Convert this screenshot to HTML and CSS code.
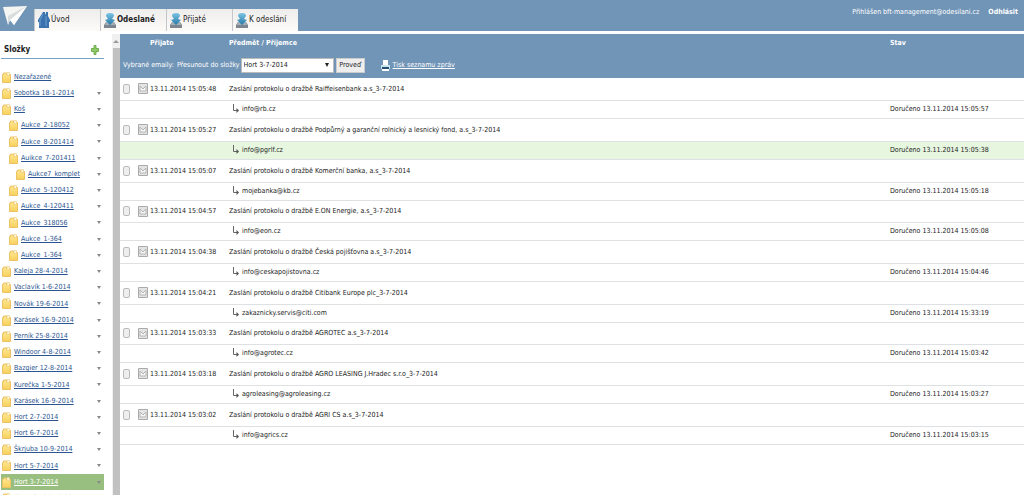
FILE: index.html
```html
<!DOCTYPE html>
<html lang="cs"><head><meta charset="utf-8"><title>Odeslané</title><link rel="stylesheet" href="styles.css"></head>
<body>
<svg class="sprites" aria-hidden="true">
<defs>
<linearGradient id="blue" x1="0" y1="0" x2="0" y2="1"><stop offset="0" stop-color="#7cc4e4"/><stop offset="1" stop-color="#2579a8"/></linearGradient>
<linearGradient id="gold" x1="0" y1="0" x2="0" y2="1"><stop offset="0" stop-color="#ffe893"/><stop offset="1" stop-color="#f8d05c"/></linearGradient>
</defs>
<symbol id="folder" viewBox="0 0 9 11"><path d="M.5 2.500H1.500V1H4.500V2.500H8.500V10.500H.5Z" fill="url(#gold)" stroke="#ecc264"/><path d="M5 .5h2.500v3H5z" fill="#fff6d6" stroke="#e9c367" stroke-width=".5"/></symbol>
<symbol id="outbox" viewBox="0 0 12 15"><path d="M2 9h8l2 3v3H0v-3z" fill="#7d868e"/><path d="M2 9h8l1 3H1z" fill="#a9b1b8"/><path d="M6 0C9 0 10 1 10 3L8 6l3 1-5 5-5-5 3-1-2-3C2 1 3 0 6 0Z" fill="url(#blue)"/></symbol>
<symbol id="mail" viewBox="0 0 10 11"><path d="M.5.5h9v10h-9z" fill="#e4e4e4" stroke="#aaa"/><path d="M2 3v5h6V3L5 6 2 3" fill="#f7f7f7" stroke="#b4b4b4"/></symbol>
<symbol id="reply" viewBox="0 0 6 10"><path d="M.5 0v6.500H5" fill="none" stroke="#666"/><path d="M3.500 4 6 6.500 3.500 9Z" fill="#555"/></symbol>
</svg>
<header class="top">
<svg class="logo" viewBox="0 0 26 20"><path d="M2 1 26 0 13 19 9 14 7 19Z" fill="#f5f5f3"/><path d="M7 10 26 0 9 14 7 19Z" fill="#d9dcdc"/><path d="M9 14 26 0 13 19Z" fill="#fff"/></svg>
<nav class="tabs">
<a class="tab" href="#"><svg class="home" viewBox="0 0 12 16"><path d="M5 0 0 8v2h1v6h10v-6h1V8L10 4V0H8v3L7 1V0Z" fill="#3a73ad"/><path d="M5 2 2 8v6M8 4v10" fill="none" stroke="#6c9fd0"/></svg>Úvod</a>
<a class="tab active" href="#"><svg class="out"><use href="#outbox"/></svg>Odeslané</a>
<a class="tab" href="#"><svg class="out"><use href="#outbox"/></svg>Přijaté</a>
<a class="tab" href="#"><svg class="out"><use href="#outbox"/></svg>K odeslání</a>
</nav>
<div class="user"><span>Přihlášen bft-management@odesilani.cz</span><a href="#">Odhlásit</a></div>
</header>
<div class="layout">
<aside class="side">
<div class="side-main">
<div class="side-head"><h2>Složky</h2><button class="add" aria-label="Přidat složku"><svg viewBox="0 0 8 10"><path d="M3 .5h2v3h2.500v3H5v3H3v-3H.5v-3H3Z" fill="#8fc866" stroke="#6fae50"/></svg></button></div>
<ul class="folders" id="folders"></ul>
</div>
<div class="scroll"><span class="up"></span><span class="thumb"></span></div>
</aside>
<main>
<table class="mails">
<colgroup><col class="c-check"><col class="c-date"><col class="c-subject"><col class="c-state"></colgroup>
<thead>
<tr class="heads"><th></th><th class="received">Přijato</th><th>Předmět / Příjemce</th><th>Stav</th></tr>
<tr><td colspan="4"><div class="tools"><div class="labels"><span>Vybrané emaily:</span><label for="target">Přesunout do složky</label></div><span class="picker"><select id="target"><option>Hort 3-7-2014</option></select></span><button class="go">Proveď</button><a class="print" href="#"><svg viewBox="0 0 9 11"><path d="M2 0h5v5H2z" fill="#fff"/><path d="M0 5h9v4H0z" fill="#c9e4f2"/><path d="M1 7h7v2H1z" fill="#25506f"/><path d="M1 9h7v2H1z" fill="#fff"/></svg><span>Tisk seznamu zpráv</span></a></div></td></tr>
</thead>
<tbody id="rows"></tbody>
</table>
</main>
</div>
<script src="app.js"></script>
</body></html>
```
FILE: styles.css
```css
* { box-sizing: border-box; }
body { margin: 0; height: 100vh; overflow: hidden; display: flex; flex-direction: column; background: #fff; color: #222; font: 7px/12px "DejaVu Sans Condensed", "DejaVu Sans", sans-serif; }
button, select { font: inherit; color: inherit; }
.sprites { position: absolute; width: 0; height: 0; }
.top { display: flex; align-items: flex-end; height: 31px; flex: none; background: #7195b7; color: #fff; }
.logo { width: 26px; height: 20px; margin: 0 7px 5px 1px; }
.tabs { display: flex; }
.tab { display: flex; align-items: center; gap: 1px; width: 66px; height: 22px; padding-left: 3px; background: linear-gradient(#ededed, #fdfbf8); border-left: 1px solid #c3c7ca; color: #222; font-size: 8px; text-decoration: none; white-space: nowrap; }
.tab.active { font-weight: bold; }
.tab svg { flex: none; }
.home { width: 12px; height: 16px; }
.out { width: 12px; height: 15px; }
.user { display: flex; gap: 9px; margin: 0 6px 0 auto; align-self: flex-start; padding-top: 6px; }
.user a { color: #fff; font-weight: bold; text-decoration: none; }
.layout { display: flex; flex: 1; min-height: 0; padding-top: 3px; }
.side { display: flex; width: 120px; flex: none; }
.side-main { flex: 1; padding-left: 1px; margin-right: 8px; overflow: hidden; }
.side-head { display: flex; align-items: center; height: 25px; padding: 8px 5px 0 3px; border-bottom: 1px solid #7da2c6; }
h2 { margin: 0; font-size: 8px; }
.add { margin-left: auto; padding: 0; border: 0; background: none; width: 8px; height: 10px; }
.add svg { display: block; width: 8px; height: 10px; }
.folders { list-style: none; margin: 0; padding: 10px 0 0; }
.folder { display: flex; align-items: center; gap: 3px; height: 16px; padding: 0 3px 0 1px; }
.folder:nth-child(5n) { height: 17px; }
.folder svg { width: 9px; height: 11px; flex: none; }
.folder a { color: #2b5590; white-space: nowrap; }
.level1 { padding-left: 8px; }
.level2 { padding-left: 15px; }
.folder i { margin-left: auto; border: solid transparent; border-width: 3px 2px 0; border-top-color: #888; }
.folder.selected { background: #98bf80; }
.selected a { color: #fff; }
.scroll { width: 8px; display: flex; flex-direction: column; align-items: center; background: #f0f0f0; }
.up { margin: 6px 0 5px; border: solid transparent; border-width: 0 3px 3px; border-bottom-color: #999; }
.thumb { flex: 1; width: 7px; background: #c1c1c1; }
main { flex: 1; min-width: 0; }
.mails { width: 100%; border-collapse: collapse; table-layout: fixed; }
.c-check { width: 18px; }
.c-date { width: 91px; }
.c-state { width: 134px; }
td, th { padding: 0; text-align: left; white-space: nowrap; }
thead { background: #7195b7; color: #fff; }
.heads { height: 18px; }
.received { padding-left: 12px; }
.tools { display: flex; align-items: center; height: 26px; padding-left: 3px; }
.labels { display: flex; gap: 3px; margin-right: 1px; }
.picker { position: relative; width: 93px; height: 15px; margin-right: 2px; }
.picker::after { content: ""; position: absolute; right: 5px; top: 5px; border: solid transparent; border-width: 4px 2px 0; border-top-color: #222; pointer-events: none; }
.picker select { appearance: none; display: block; width: 100%; height: 100%; padding: 0 12px 0 2px; border: 1px solid #bbb; border-radius: 0; background: #fff; color: #222; }
.go { width: 29px; height: 15px; padding: 0; border: 1px solid #ccc; background: #eee; color: #222; }
.print { display: flex; align-items: center; gap: 3px; margin-left: 16px; color: #fff; }
.print svg { width: 9px; height: 11px; }
tbody td { border-bottom: 1px solid #dde1e4; }
.message { height: 23px; }
.message:nth-child(6n+1) { height: 22px; }
.recipient { height: 18px; }
.highlight { background: #e6f6df; }
.message input { appearance: none; display: block; width: 7px; height: 10px; margin: 0 0 0 3px; border: 1px solid #bbb; border-radius: 2px; background: #eee; }
.cell { display: flex; align-items: center; gap: 2px; }
.cell svg { width: 10px; height: 11px; }
.cell.to { gap: 3px; padding-left: 4px; }
.to svg { width: 6px; height: 10px; }
```
FILE: app.js
```js
const folders = [["Nezařazené",0],["Sobotka 18-1-2014",0],["Koš",0],["Aukce_2-18052",1],["Aukce_8-201414",1],["Auikce_7-201411",1],["Aukce7_komplet",2],["Aukce_5-120412",1],["Aukce_4-120411",1],["Aukce_318056",1],["Aukce_1-364",1],["Aukce_1-364",1],["Kaleja 28-4-2014",0],["Vaclavík 1-6-2014",0],["Novák 19-6-2014",0],["Karásek 16-9-2014",0],["Perník 25-8-2014",0],["Windoor 4-8-2014",0],["Bazgier 12-8-2014",0],["Kurečka 1-5-2014",0],["Karásek 16-9-2014",0],["Hort 2-7-2014",0],["Hort 6-7-2014",0],["Škrjuba 10-9-2014",0],["Hort 5-7-2014",0],["Hort 3-7-2014",0],["Skoupford 24-9-2014",0]];
document.getElementById("folders").innerHTML = folders.map(([name, level], i) =>
  `<li class="folder level${level}${i === 25 ? " selected" : ""}"><svg><use href="#folder"/></svg><a href="#">${name}</a>${i ? "<i></i>" : ""}</li>`).join("");
const mails = [["05:48","Raiffeisenbank a.s","info@rb.cz","05:57"],["05:27","Podpůrný a garanční rolnický a lesnický fond, a.s","info@pgrlf.cz","05:38"],["05:07","Komerční banka, a.s","mojebanka@kb.cz","05:18"],["04:57","E.ON Energie, a.s","info@eon.cz","05:08"],["04:38","Česká pojišťovna a.s","info@ceskapojistovna.cz","04:46"],["04:21","Citibank Europe plc","zakaznicky.servis@citi.com","33:19"],["03:33","AGROTEC a.s","info@agrotec.cz","03:42"],["03:18","AGRO LEASING J.Hradec s.r.o","agroleasing@agroleasing.cz","03:27"],["03:02","AGRI CS a.s","info@agrics.cz","03:15"]];
document.getElementById("rows").innerHTML = mails.map(([sent, company, email, delivered], i) =>
  `<tr class="message"><td><input type="checkbox" aria-label="Vybrat ${company}"></td><td><div class="cell"><svg><use href="#mail"/></svg>13.11.2014 15:${sent}</div></td><td>Zaslání protokolu o dražbě ${company}_3-7-2014</td><td></td></tr>
  <tr class="recipient${i === 1 ? " highlight" : ""}"><td></td><td></td><td><div class="cell to"><svg><use href="#reply"/></svg>${email}</div></td><td>Doručeno 13.11.2014 15:${delivered}</td></tr>`).join("");
```
